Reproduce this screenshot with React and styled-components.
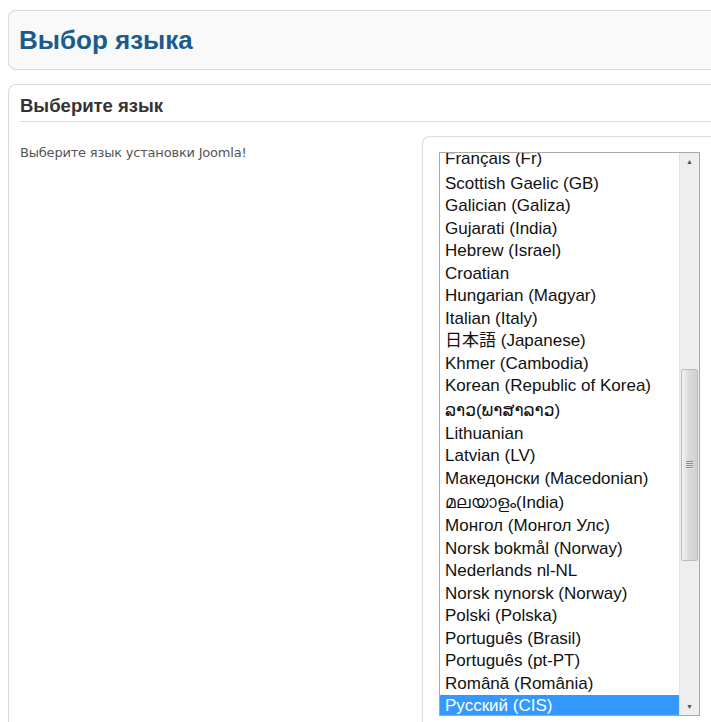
import React from 'react'
import styled, { createGlobalStyle } from 'styled-components'

const GlobalStyle = createGlobalStyle`
	html, body {
		margin: 0;
		padding: 0;
		background: #fff;
		overflow: hidden;
	}
	body {
		font-family: "Liberation Sans", Arial, sans-serif;
	}
`

const languages = [
	{ name: 'Français (Fr)' },
	{ name: 'Scottish Gaelic (GB)' },
	{ name: 'Galician (Galiza)' },
	{ name: 'Gujarati (India)' },
	{ name: 'Hebrew (Israel)' },
	{ name: 'Croatian' },
	{ name: 'Hungarian (Magyar)' },
	{ name: 'Italian (Italy)' },
	{ name: '日本語 (Japanese)' },
	{ name: 'Khmer (Cambodia)' },
	{ name: 'Korean (Republic of Korea)' },
	{ name: 'ລາວ(ພາສາລາວ)', tall: true },
	{ name: 'Lithuanian' },
	{ name: 'Latvian (LV)' },
	{ name: 'Македонски (Macedonian)' },
	{ name: 'മലയാളം(India)', tall: true },
	{ name: 'Монгол (Монгол Улс)' },
	{ name: 'Norsk bokmål (Norway)' },
	{ name: 'Nederlands nl-NL' },
	{ name: 'Norsk nynorsk (Norway)' },
	{ name: 'Polski (Polska)' },
	{ name: 'Português (Brasil)' },
	{ name: 'Português (pt-PT)' },
	{ name: 'Română (România)' },
	{ name: 'Русский (CIS)', selected: true },
]

const App = () => (
	<Page>
		<GlobalStyle />
		<TitleBox>
			<Title>Выбор языка</Title>
		</TitleBox>
		<Panel>
			<PanelHeader>Выберите язык</PanelHeader>
			<PanelBody>
				<Hint>Выберите язык установки Joomla!</Hint>
				<SelectBox>
					<ListBox>
						<Options>
							{languages.map(lang => (
								<Option key={lang.name} tall={lang.tall} selected={lang.selected}>
									{lang.name}
								</Option>
							))}
						</Options>
						<ScrollBar>
							<Arrow>▲</Arrow>
							<Track>
								<Thumb>
									<Grip />
								</Thumb>
							</Track>
							<Arrow>▼</Arrow>
						</ScrollBar>
					</ListBox>
				</SelectBox>
			</PanelBody>
		</Panel>
	</Page>
)

const Page = styled.div`
	width: 780px;
	padding: 10px 0 0 8px;
	display: flex;
	flex-direction: column;
	gap: 14px;
`

const TitleBox = styled.div`
	height: 58px;
	display: flex;
	align-items: center;
	padding: 0 10px;
	background: #f9f9f9;
	border: 1px solid #dcdcdc;
	border-radius: 8px;
	box-shadow: 0 0 1px #e6e6e6;
`

const Title = styled.h1`
	margin: 0;
	font-size: 26px;
	font-weight: bold;
	color: #1b5b8d;
`

const Panel = styled.div`
	border: 1px solid #dcdcdc;
	border-right: none;
	border-bottom: none;
	border-radius: 8px 0 0 0;
	padding: 9px 0 0 11px;
	height: 660px;
`

const PanelHeader = styled.h2`
	margin: 0;
	font-size: 18.5px;
	font-weight: bold;
	color: #333;
	line-height: 24px;
	padding-bottom: 3px;
	border-bottom: 1px solid #dcdcdc;
`

const PanelBody = styled.div`
	display: grid;
	grid-template-columns: 402px 1fr;
	margin-top: 14px;
`

const Hint = styled.p`
	margin: 9px 0 0;
	font-family: "DejaVu Sans", Verdana, sans-serif;
	font-size: 13px;
	letter-spacing: -0.2px;
	color: #555;
`

const SelectBox = styled.div`
	border: 1px solid #dcdcdc;
	border-right: none;
	border-bottom: none;
	border-radius: 8px 0 0 0;
	padding: 15px 0 0 16px;
	height: 600px;
`

const ListBox = styled.div`
	width: 259px;
	height: 562px;
	border: 1px solid #a9a9a9;
	display: flex;
	background: #fff;
	overflow: hidden;
`

/* the list is scrolled a few pixels past the first option */
const Options = styled.div`
	flex: 1;
	overflow: hidden;
	margin-top: -5px;
`

const Option = styled.div`
	height: ${props => (props.tall ? 25 : 22.5)}px;
	line-height: ${props => (props.tall ? 25 : 22.5)}px;
	padding-left: 5px;
	font-family: "Liberation Sans", "Noto Sans CJK JP", "DejaVu Sans", sans-serif;
	font-size: 17px;
	white-space: nowrap;
	color: ${props => (props.selected ? '#fff' : '#111')};
	background: ${props => (props.selected ? '#3399ff' : 'transparent')};

	&:first-child {
		line-height: 18px;
		padding-top: 2px;
		box-sizing: border-box;
		height: 24.5px;
	}
`

const ScrollBar = styled.div`
	width: 19px;
	display: flex;
	flex-direction: column;
	background: #eeeeee;
	border-left: 1px solid #e2e2e2;
`

const Arrow = styled.div`
	height: 17px;
	display: flex;
	align-items: center;
	justify-content: center;
	font-size: 7px;
	color: #555;
`

const Track = styled.div`
	flex: 1;
	padding-top: 199px;
`

const Thumb = styled.div`
	height: 190px;
	margin: 0 1px;
	border: 1px solid #bcbcbc;
	border-radius: 2px;
	background: linear-gradient(to right, #f2f2f2, #d9d9d9 50%, #d0d0d0);
	display: flex;
	align-items: center;
	justify-content: center;
`

const Grip = styled.div`
	width: 7px;
	height: 8px;
	background: repeating-linear-gradient(to bottom, #8a8a8a 0, #8a8a8a 1px, #e8e8e8 1px, #e8e8e8 2px);
`

export default App
